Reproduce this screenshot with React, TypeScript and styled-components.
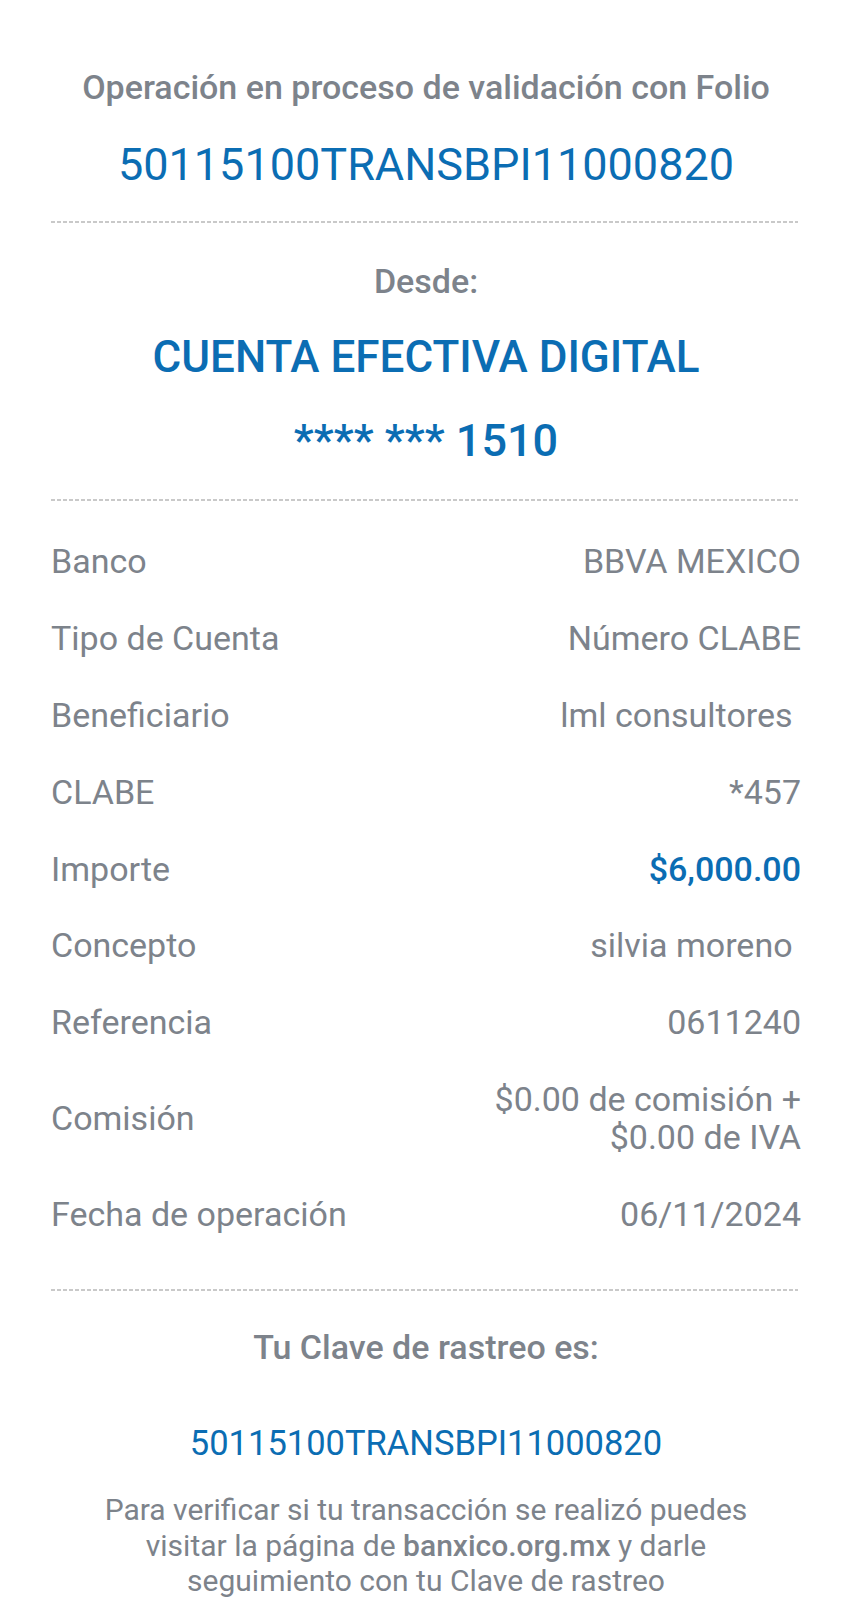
import React from "react";
import styled, { createGlobalStyle } from "styled-components";

const colours = {
  grey: "#7d838b",
  blue: "#0b6db3",
  dash: "#c9c9c9",
};

const GlobalStyle = createGlobalStyle`
  html, body {
    margin: 0;
    padding: 0;
    background: #ffffff;
  }
  body {
    font-family: Roboto, "Noto Sans", "Liberation Sans", sans-serif;
    -webkit-font-smoothing: antialiased;
  }
`;

const Page = styled.div`
  display: flex;
  flex-direction: column;
  align-items: stretch;
  padding: 67px 50px 0 51px;
  width: 851px;
  box-sizing: border-box;
`;

const Title = styled.h2<{ $top?: number }>`
  margin: ${(p) => p.$top ?? 0}px 0 0;
  font-size: 34px;
  line-height: 40px;
  font-weight: 500;
  color: ${colours.grey};
  text-align: center;
`;

const BigBlue = styled.div<{ $top: number; $size: number; $weight?: number }>`
  margin-top: ${(p) => p.$top}px;
  font-size: ${(p) => p.$size}px;
  line-height: 52px;
  font-weight: ${(p) => p.$weight ?? 400};
  color: ${colours.blue};
  text-align: center;
`;

const Splitter = styled.div<{ $top: number }>`
  margin-top: ${(p) => p.$top}px;
  width: 747px;
  height: 2px;
  background: repeating-linear-gradient(
    to right,
    ${colours.dash} 0 4px,
    transparent 4px 6px
  );
`;

const Details = styled.div`
  display: flex;
  flex-direction: column;
  margin-top: 22px;
`;

const Row = styled.div`
  display: flex;
  justify-content: space-between;
  align-items: center;
  padding: 19.4px 0;
  font-size: 34px;
  line-height: 38px;
`;

const Label = styled.span`
  color: ${colours.grey};
`;

const Value = styled.span<{ $highlight?: boolean }>`
  max-width: 340px;
  text-align: right;
  white-space: pre-wrap;
  color: ${(p) => (p.$highlight ? colours.blue : colours.grey)};
  font-weight: ${(p) => (p.$highlight ? 500 : 400)};
`;

const Clave = styled.div`
  margin-top: 56px;
  font-size: 34.5px;
  line-height: 40px;
  color: ${colours.blue};
  text-align: center;
`;

const Note = styled.p`
  margin: 29px auto 0;
  max-width: 690px;
  font-size: 30px;
  line-height: 35.5px;
  color: ${colours.grey};
  text-align: center;

  b {
    font-weight: 500;
  }
`;

const rows: { label: string; value: string; highlight?: boolean }[] = [
  { label: "Banco", value: "BBVA MEXICO" },
  { label: "Tipo de Cuenta", value: "Número CLABE" },
  { label: "Beneficiario", value: "lml consultores\u00a0" },
  { label: "CLABE", value: "*457" },
  { label: "Importe", value: "$6,000.00", highlight: true },
  { label: "Concepto", value: "silvia moreno\u00a0" },
  { label: "Referencia", value: "0611240" },
  { label: "Comisión", value: "$0.00 de comisión + $0.00 de IVA" },
  { label: "Fecha de operación", value: "06/11/2024" },
];

const App: React.FC = () => {
  return (
    <>
      <GlobalStyle />
      <Page>
        <Title>Operación en proceso de validación con Folio</Title>
        <BigBlue $top={32} $size={45}>
          50115100TRANSBPI11000820
        </BigBlue>
        <Splitter $top={30} />
        <Title $top={38}>Desde:</Title>
        <BigBlue $top={30} $size={44} $weight={500}>
          CUENTA EFECTIVA DIGITAL
        </BigBlue>
        <BigBlue $top={32} $size={45} $weight={500}>
          **** *** 1510
        </BigBlue>
        <Splitter $top={32} />
        <Details>
          {rows.map((row) => (
            <Row key={row.label}>
              <Label>{row.label}</Label>
              <Value $highlight={row.highlight}>{row.value}</Value>
            </Row>
          ))}
        </Details>
        <Splitter $top={37} />
        <Title $top={36}>Tu Clave de rastreo es:</Title>
        <Clave>50115100TRANSBPI11000820</Clave>
        <Note>
          Para verificar si tu transacción se realizó puedes visitar la página
          de <b>banxico.org.mx</b> y darle seguimiento con tu Clave de rastreo
        </Note>
      </Page>
    </>
  );
};

export default App;
